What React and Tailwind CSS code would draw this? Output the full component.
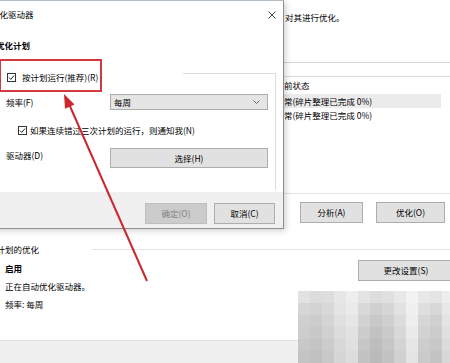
// Optimize Drives - schedule dialog over the main window, with annotation arrow
import React from 'react';

const MOSAIC = [
  ['#e2e2e2', '#dcdcdc', '#dddddd', '#e6e6e6', '#eeeeee', '#e3e3e3', '#dddddd', '#e0e0e0', '#e8e8e8', '#f2f2f2', '#e8e8e8', '#e4e4e4', '#eeeeee'],
  ['#d6d6d6', '#d2d2d2', '#d8d8d8', '#e4e4e4', '#eaeaea', '#d8d8d8', '#d0d0d0', '#d6d6d6', '#e2e2e2', '#f0f0f0', '#dedede', '#d8d8d8', '#e8e8e8'],
  ['#d0d0d0', '#cccccc', '#d4d4d4', '#e0e0e0', '#e6e6e6', '#d2d2d2', '#c8c8c8', '#cfcfcf', '#dcdcdc', '#eeeeee', '#d6d6d6', '#d0d0d0', '#e4e4e4'],
  ['#cdcdcd', '#c8c8c8', '#d0d0d0', '#dcdcdc', '#e2e2e2', '#cccccc', '#c2c2c2', '#cacaca', '#d8d8d8', '#eaeaea', '#d2d2d2', '#cccccc', '#e0e0e0'],
  ['#c8c8c8', '#c4c4c4', '#cccccc', '#d8d8d8', '#e0e0e0', '#c6c6c6', '#bdbdbd', '#c6c6c6', '#d4d4d4', '#e6e6e6', '#cdcdcd', '#c8c8c8', '#dcdcdc'],
  ['#c4c4c4', '#c0c0c0', '#c8c8c8', '#d6d6d6', '#dcdcdc', '#c2c2c2', '#bababa', '#c2c2c2', '#d0d0d0', '#e4e4e4', '#cacaca', '#c4c4c4', '#d8d8d8'],
];

const CheckBox = () => (
  <svg width="9" height="9" viewBox="0 0 9 9" className="shrink-0">
    <rect x="0.5" y="0.5" width="8" height="8" fill="white" stroke="#333" />
    <path d="M2 4.6 L3.8 6.4 L7 2.6" fill="none" stroke="#222" strokeWidth="1" />
  </svg>
);

const WinButton = ({ children, className = '' }) => (
  <div className={`flex items-center justify-center bg-[#e1e1e1] border border-[#adadad] ${className}`}>
    {children}
  </div>
);

const App = () => {
  return (
    <div className="relative w-[450px] h-[363px] overflow-hidden bg-white text-black text-[8.5px] font-['Noto_Sans_CJK_SC','Liberation_Sans',sans-serif]">
      {/* Main window (background) */}
      <div className="flex flex-col h-full">
        <div className="flex h-[193px]">
          <div className="w-[283px] shrink-0" />
          <div className="flex-1 flex flex-col">
            <p className="mt-[11px] pl-[2px] leading-[12px]">对其进行优化。</p>
            <div className="mt-[39px] h-px bg-[#d6d6d6]" />
            <div className="mt-[13px] h-px bg-[#dcdcdc]" />
            <div className="h-[17px] flex items-center pl-[1px] pr-[9px]">前状态</div>
            <div className="mr-[9px] h-[14px] flex items-center pl-[1px] bg-[#ebebeb]">常(碎片整理已完成 0%)</div>
            <div className="h-[15px] flex items-center pl-[1px]">常(碎片整理已完成 0%)</div>
          </div>
        </div>

        <div className="h-[47px] border-t border-[#e3e3e3] pt-[8px] pl-[300px] flex gap-[13px]">
          <WinButton className="w-[63px] h-[21px]">分析(A)</WinButton>
          <WinButton className="w-[69px] h-[21px]">优化(O)</WinButton>
        </div>

        <div className="h-[100px] flex flex-col">
          <div className="mt-[2px] h-[14px] flex items-center">
            <span className="ml-[-12px]">已计划的优化</span>
            <div className="ml-[53px] flex-1 h-px bg-[#e3e3e3]" />
          </div>
          <div className="flex">
            <div className="flex-1 pl-[5px] flex flex-col">
              <p className="mt-[6px] leading-[12px] font-bold">启用</p>
              <p className="mt-[6px] leading-[12px]">正在自动优化驱动器。</p>
              <p className="mt-[6px] leading-[12px]">频率: 每周</p>
            </div>
            <WinButton className="mt-[4px] w-[96px] h-[21px] mr-[-4px] shrink-0">更改设置(S)</WinButton>
          </div>
        </div>

        <div className="flex-1 bg-[#f0f0f0] border-t border-[#dfdfdf]" />
      </div>

      {/* Pixelated watermark */}
      <svg className="absolute left-[298px] top-[291px]" width="156" height="72" viewBox="0 0 156 72">
        {MOSAIC.map((row, r) =>
          row.map((c, i) => <rect key={`${r}-${i}`} x={i * 12} y={r * 12} width="12" height="12" fill={c} />)
        )}
      </svg>

      {/* Optimization schedule dialog */}
      <div className="absolute left-[-16px] top-0 w-[300px] h-[229px] flex flex-col bg-white border border-[#8e8e8e] border-t-[#b4bec6] shadow-[2px_2px_6px_rgba(0,0,0,0.18)]">
        <div className="h-[27px] shrink-0 flex items-center justify-between pl-[6px] pr-[7px]">
          <span>优化驱动器</span>
          <svg width="8" height="8" viewBox="0 0 8 8">
            <path d="M0.5 0.5 L7.5 7.5 M7.5 0.5 L0.5 7.5" stroke="#333" strokeWidth="0.9" />
          </svg>
        </div>

        <p className="mt-[10px] pl-[11px] leading-[14px] font-bold">优化计划</p>

        <div className="mt-[21px] mr-[7px] h-[117px] border-r border-[#dcdcdc] flex flex-col">
          <div className="-mt-[3px] h-[14px] flex items-center pl-[22px]">
            <CheckBox />
            <span className="ml-[6px]">按计划运行(推荐)(R)</span>
            <div className="ml-[85px] flex-1 h-px self-start mt-[3px] bg-[#dcdcdc]" />
          </div>

          <div className="mt-[10px] flex items-center pl-[21px]">
            <span className="w-[104px] shrink-0">频率(F)</span>
            <div className="w-[158px] h-[16px] flex items-center justify-between pl-[3px] pr-[7px] bg-[#e5e5e5] border border-[#adadad]">
              <span>每周</span>
              <svg width="7" height="4" viewBox="0 0 7 4">
                <path d="M0.5 0.5 L3.5 3.5 L6.5 0.5" fill="none" stroke="#555" strokeWidth="0.9" />
              </svg>
            </div>
          </div>

          <div className="mt-[13px] h-[14px] flex items-center pl-[33px]">
            <CheckBox />
            <span className="ml-[3px]">如果连续错过三次计划的运行，则通知我(N)</span>
          </div>

          <div className="mt-[11px] flex items-start pl-[21px]">
            <span className="w-[104px] shrink-0 mt-[1px] leading-[12px]">驱动器(D)</span>
            <WinButton className="w-[158px] h-[20px]">选择(H)</WinButton>
          </div>
        </div>

        <div className="mt-auto h-[36px] shrink-0 bg-[#f0f0f0] flex justify-end items-start gap-[7px] pt-[11px] pr-[8px]">
          <div className="w-[62px] h-[21px] flex items-center justify-center bg-[#cccccc] border border-[#bfbfbf] text-[#838383]">确定(O)</div>
          <WinButton className="w-[61px] h-[21px]">取消(C)</WinButton>
        </div>
      </div>

      {/* Annotation: red highlight box */}
      <div className="absolute left-[-1px] top-[59px] w-[103px] h-[33px] border-2 border-[#d33a40]" />

      {/* Annotation: red arrow */}
      <svg className="absolute left-0 top-0 pointer-events-none" width="450" height="363" viewBox="0 0 450 363">
        <line x1="147" y1="281" x2="69" y2="104" stroke="#c8282e" strokeWidth="2" />
        <polygon points="64,94 74.5,104.6 65,108.8" fill="#c8282e" />
      </svg>
    </div>
  );
};

export default App;
